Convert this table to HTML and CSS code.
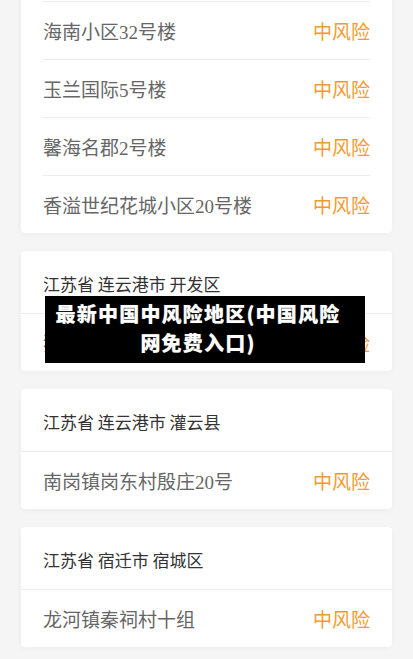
FILE: index.html
```html
<!DOCTYPE html>
<html>
<head>
    <meta charset="utf-8">
    <title>中风险地区</title>
    <link rel="stylesheet" href="styles.css">
</head>
<body>
    <div class="list">
        <div class="card">
            <div class="card-head">海南省 海口市 美兰区</div>
            <div class="row">
                <span class="place">海南小区31号楼</span>
                <span class="level">中风险</span>
            </div>
            <div class="row">
                <span class="place">海南小区32号楼</span>
                <span class="level">中风险</span>
            </div>
            <div class="row">
                <span class="place">玉兰国际5号楼</span>
                <span class="level">中风险</span>
            </div>
            <div class="row">
                <span class="place">馨海名郡2号楼</span>
                <span class="level">中风险</span>
            </div>
            <div class="row">
                <span class="place">香溢世纪花城小区20号楼</span>
                <span class="level">中风险</span>
            </div>
        </div>

        <div class="card">
            <div class="card-head">江苏省 连云港市 开发区</div>
            <div class="row">
                <span class="place">猴嘴街道东方小区</span>
                <span class="level">中风险</span>
            </div>
        </div>

        <div class="card">
            <div class="card-head">江苏省 连云港市 灌云县</div>
            <div class="row">
                <span class="place">南岗镇岗东村殷庄20号</span>
                <span class="level">中风险</span>
            </div>
        </div>

        <div class="card">
            <div class="card-head">江苏省 宿迁市 宿城区</div>
            <div class="row">
                <span class="place">龙河镇秦祠村十组</span>
                <span class="level">中风险</span>
            </div>
        </div>
    </div>

    <div class="banner">最新中国中风险地区(中国风险<br>网免费入口)</div>
</body>
</html>
```

FILE: styles.css
```css
* {
    margin: 0;
    padding: 0;
    box-sizing: border-box;
}

body {
    background-color: #f5f5f5;
    font-family: "Noto Sans CJK SC", sans-serif;
    overflow: hidden;
}

.list {
    margin: -119px 21px 0 21px;
}

.card {
    background: #fff;
    border-radius: 4px;
    box-shadow: 0 1px 6px rgba(0,0,0,0.04);
    margin-bottom: 18px;
}

.card-head {
    display: flex;
    align-items: center;
    height: 63px;
    padding: 3px 22px 0 22px;
    border-bottom: 1px solid #ececec;
    font-size: 17px;
    line-height: 20px;
    color: #333;
    white-space: pre;
}

.row {
    display: flex;
    justify-content: space-between;
    align-items: center;
    box-sizing: content-box;
    height: 55px;
    padding-top: 2px;
    margin: 0 22px;
    font-family: "Liberation Serif", "Noto Sans CJK SC", serif;
    font-size: 19px;
    line-height: 22px;
}

.row + .row {
    border-top: 1px solid #ececec;
}

.place {
    color: #666;
    padding-top: 2px;
}

.level {
    color: #f39b30;
    font-family: "Noto Sans CJK SC", sans-serif;
    font-size: 19px;
    padding-bottom: 1px;
}

.banner {
    position: absolute;
    left: 45px;
    top: 296px;
    width: 320px;
    height: 67px;
    padding: 3px 24px 0 10px;
    background: #000;
    color: #fff;
    font-size: 20px;
    font-weight: 900;
    line-height: 29px;
    letter-spacing: 1.2px;
    text-align: center;
    text-shadow: 0 0 1px #444, 0 0 1px #444;
}
```
